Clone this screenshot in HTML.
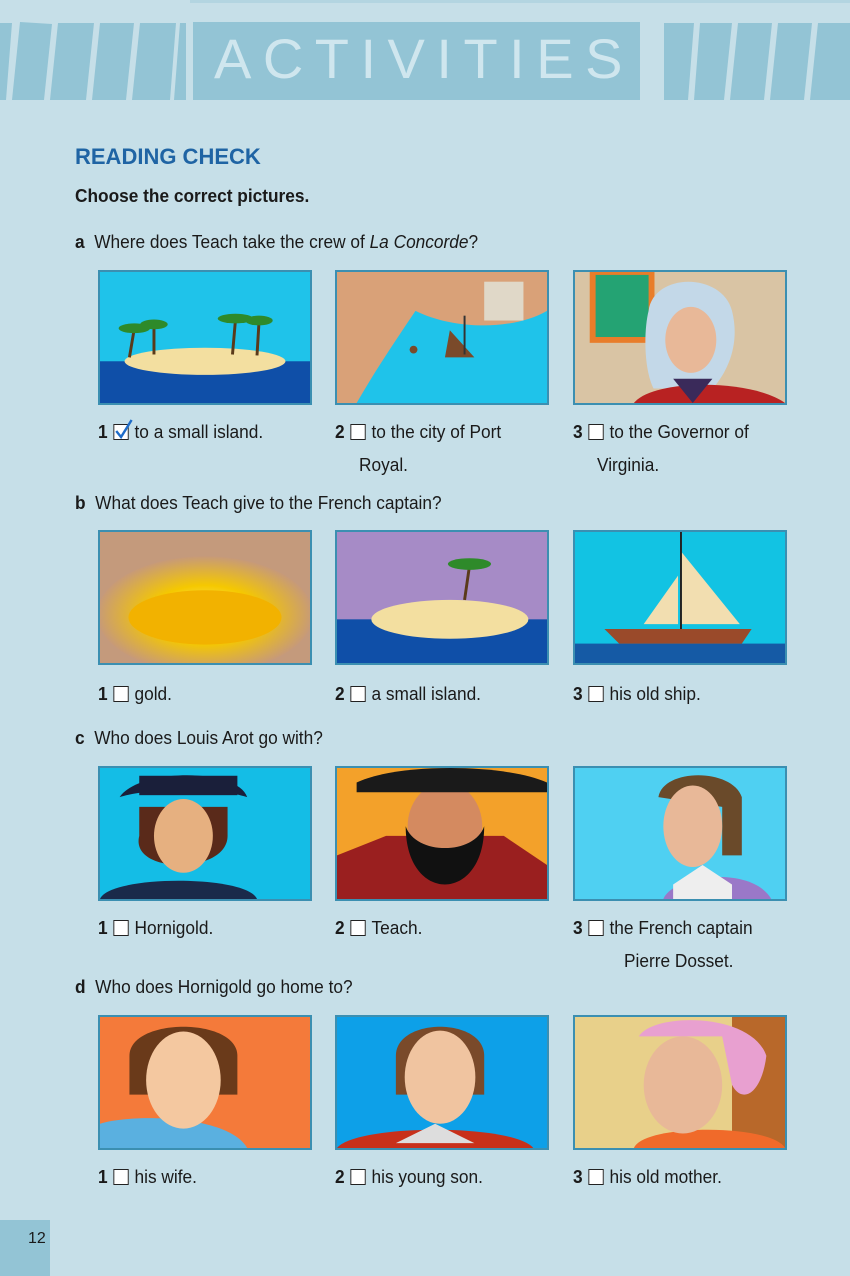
<!DOCTYPE html>
<html><head><meta charset="utf-8">
<style>
*{margin:0;padding:0;box-sizing:border-box}
body{width:850px;height:1276px;background:#c6dfe8;position:relative;overflow:hidden;font-family:"Liberation Sans Narrow","Liberation Sans",sans-serif;color:#1a1a1a}
.a{position:absolute;white-space:nowrap}
.t{font-size:18px;transform:scaleX(0.96);transform-origin:left top}
.b{font-weight:bold}
.pic{position:absolute;width:214px;height:135px;border:2px solid #3b8fb1;overflow:hidden}
.pic svg{display:block;width:100%;height:100%}
.cb{display:inline-block;width:16px;height:16px;border:1.5px solid #222;background:#fff;vertical-align:-2px;margin:0 6px 0 6px;position:relative}
.st{position:absolute;top:22px;height:78px;background:#93c4d5}
</style></head><body>
<div class="a" style="left:190px;top:0;width:1000px;height:3px;background:#b3d5e1"></div>
<svg class="a" style="left:0;top:20px" width="190" height="82"><g fill="#93c4d5">
<polygon points="0,3 12,3 6,80 0,80"/><polygon points="20,2 52,4 44,80 12,80"/><polygon points="58,3 94,3 86,80 50,80"/><polygon points="100,3 134,3 126,80 92,80"/><polygon points="140,3 176,3 170,80 132,80"/><polygon points="180,3 186,3 186,80 174,80"/></g></svg>
<div class="st" style="left:193px;width:447px"></div>
<div class="a" style="left:214px;top:26px;font-family:'Liberation Sans',sans-serif;font-size:56px;color:#cfe6ee;letter-spacing:11.5px">ACTIVITIES</div>
<svg class="a" style="left:664px;top:20px" width="186" height="82"><g fill="#93c4d5">
<polygon points="0,3 30,3 24,80 0,80"/><polygon points="36,3 68,3 60,80 30,80"/><polygon points="74,3 108,3 100,80 66,80"/><polygon points="114,3 148,3 140,80 106,80"/><polygon points="154,3 186,3 186,80 146,80"/></g></svg>

<div class="a b" style="left:75px;top:144px;font-size:22px;color:#1f64a4">READING CHECK</div>
<div class="a b t" style="left:75px;top:186px">Choose the correct pictures.</div>

<div class="a t" style="left:75px;top:232px"><b>a</b>&nbsp;&nbsp;Where does Teach take the crew of <i>La Concorde</i>?</div>
<div class="pic" style="left:98px;top:270px"><svg viewBox="0 0 214 135" preserveAspectRatio="none"><rect width="214" height="135" fill="#1fc3ea"/><rect y="92" width="214" height="43" fill="#0f4fa8"/><ellipse cx="107" cy="92" rx="82" ry="14" fill="#f3dfa0"/><g stroke="#5a3a1a" stroke-width="3"><line x1="30" y1="88" x2="35" y2="58"/><line x1="55" y1="85" x2="55" y2="55"/><line x1="135" y1="85" x2="138" y2="50"/><line x1="160" y1="86" x2="162" y2="52"/></g><g fill="#2e8a2a"><ellipse cx="35" cy="58" rx="16" ry="5"/><ellipse cx="55" cy="54" rx="14" ry="5"/><ellipse cx="138" cy="48" rx="18" ry="5"/><ellipse cx="162" cy="50" rx="14" ry="5"/></g></svg></div>
<div class="pic" style="left:335px;top:270px"><svg viewBox="0 0 214 135" preserveAspectRatio="none"><rect width="214" height="135" fill="#1fc3ea"/><path d="M0 0H214V40C180 60 120 60 80 40 60 70 40 100 20 135H0Z" fill="#d9a178"/><rect x="150" y="10" width="40" height="40" fill="#e0d8c8"/><path d="M115 60l25 28h-30z" fill="#7a4a2a"/><line x1="130" y1="45" x2="130" y2="85" stroke="#333" stroke-width="2"/><circle cx="78" cy="80" r="4" fill="#7a4a2a"/></svg></div>
<div class="pic" style="left:573px;top:270px"><svg viewBox="0 0 214 135" preserveAspectRatio="none"><rect width="214" height="135" fill="#d9c4a4"/><rect x="18" y="0" width="60" height="70" fill="#24a373" stroke="#e87d2a" stroke-width="6"/><path d="M75 40C80 0 150 0 160 40 170 80 150 110 140 120H80C70 100 70 60 75 40Z" fill="#c3d8e8"/><ellipse cx="118" cy="70" rx="26" ry="34" fill="#e8b898"/><path d="M60 135C80 110 180 110 214 135Z" fill="#b82222"/><path d="M100 110l20 25 20-25z" fill="#3a2a5a"/></svg></div>
<div class="a t" style="left:98px;top:422px"><b>1</b><span class="cb"><svg style="position:absolute;left:-1px;top:-6px" width="22" height="22"><path d="M3 12l5 6L19 1" stroke="#1e6cc8" stroke-width="2.5" fill="none"/></svg></span>to a small island.</div>
<div class="a t" style="left:335px;top:422px"><b>2</b><span class="cb"></span>to the city of Port</div>
<div class="a t" style="left:359px;top:455px">Royal.</div>
<div class="a t" style="left:573px;top:422px"><b>3</b><span class="cb"></span>to the Governor of</div>
<div class="a t" style="left:597px;top:455px">Virginia.</div>

<div class="a t" style="left:75px;top:493px"><b>b</b>&nbsp;&nbsp;What does Teach give to the French captain?</div>
<div class="pic" style="left:98px;top:530px"><svg viewBox="0 0 214 135" preserveAspectRatio="none"><defs><radialGradient id="g"><stop offset="0" stop-color="#fff27a"/><stop offset="0.5" stop-color="#f5c800"/><stop offset="1" stop-color="#c79a78"/></radialGradient></defs><rect width="214" height="135" fill="#c49a7c"/><ellipse cx="107" cy="85" rx="110" ry="60" fill="url(#g)"/><ellipse cx="107" cy="88" rx="78" ry="28" fill="#f2b200"/></svg></div>
<div class="pic" style="left:335px;top:530px"><svg viewBox="0 0 214 135" preserveAspectRatio="none"><rect width="214" height="135" fill="#a68bc6"/><rect y="90" width="214" height="45" fill="#0f4fa8"/><ellipse cx="115" cy="90" rx="80" ry="20" fill="#f3dfa0"/><line x1="130" y1="70" x2="135" y2="35" stroke="#5a3a1a" stroke-width="3"/><ellipse cx="135" cy="33" rx="22" ry="6" fill="#2e8a2a"/></svg></div>
<div class="pic" style="left:573px;top:530px"><svg viewBox="0 0 214 135" preserveAspectRatio="none"><rect width="214" height="135" fill="#12c3e3"/><rect y="115" width="214" height="20" fill="#155aa5"/><path d="M30 100h150l-10 15H45z" fill="#9a4a2a"/><path d="M70 95l35-50v50z M108 95V20l60 75z" fill="#f2deb0"/><line x1="108" y1="0" x2="108" y2="100" stroke="#222" stroke-width="2"/></svg></div>
<div class="a t" style="left:98px;top:684px"><b>1</b><span class="cb"></span>gold.</div>
<div class="a t" style="left:335px;top:684px"><b>2</b><span class="cb"></span>a small island.</div>
<div class="a t" style="left:573px;top:684px"><b>3</b><span class="cb"></span>his old ship.</div>

<div class="a t" style="left:75px;top:728px"><b>c</b>&nbsp;&nbsp;Who does Louis Arot go with?</div>
<div class="pic" style="left:98px;top:766px"><svg viewBox="0 0 214 135" preserveAspectRatio="none"><rect width="214" height="135" fill="#14bde6"/><path d="M0 135C10 110 150 110 160 135Z" fill="#1a2a4a"/><path d="M40 70C30 110 130 110 130 70V40H40Z" fill="#5a2a1a"/><ellipse cx="85" cy="70" rx="30" ry="38" fill="#e6b080"/><path d="M20 30C40 0 140 0 150 30 120 20 50 20 20 30Z" fill="#1a1f3a"/><rect x="40" y="8" width="100" height="20" fill="#1a1f3a"/></svg></div>
<div class="pic" style="left:335px;top:766px"><svg viewBox="0 0 214 135" preserveAspectRatio="none"><rect width="214" height="135" fill="#f3a12a"/><path d="M0 135V90L50 70H170L214 100V135Z" fill="#9a1f1f"/><ellipse cx="110" cy="60" rx="38" ry="45" fill="#d48a60"/><path d="M70 60C70 140 150 140 150 60 140 90 80 90 70 60Z" fill="#111"/><path d="M20 15C60 -5 170 -5 214 15V25H20Z" fill="#1a1a1a"/></svg></div>
<div class="pic" style="left:573px;top:766px"><svg viewBox="0 0 214 135" preserveAspectRatio="none"><rect width="214" height="135" fill="#4fd0f2"/><path d="M90 135C100 110 180 100 200 135Z" fill="#9a78c8"/><path d="M100 120l30-20 30 20v15h-60z" fill="#eee"/><path d="M85 30C90 0 160 0 170 30V90H150V40Z" fill="#6a4a2a"/><ellipse cx="120" cy="60" rx="30" ry="42" fill="#e8b898"/></svg></div>
<div class="a t" style="left:98px;top:918px"><b>1</b><span class="cb"></span>Hornigold.</div>
<div class="a t" style="left:335px;top:918px"><b>2</b><span class="cb"></span>Teach.</div>
<div class="a t" style="left:573px;top:918px"><b>3</b><span class="cb"></span>the French captain</div>
<div class="a t" style="left:624px;top:951px">Pierre Dosset.</div>

<div class="a t" style="left:75px;top:977px"><b>d</b>&nbsp;&nbsp;Who does Hornigold go home to?</div>
<div class="pic" style="left:98px;top:1015px"><svg viewBox="0 0 214 135" preserveAspectRatio="none"><rect width="214" height="135" fill="#f47a3a"/><path d="M0 135V110C30 100 130 100 150 135Z" fill="#5ab0e0"/><path d="M30 40C30 0 140 0 140 40V80H30Z" fill="#6a3a1a"/><ellipse cx="85" cy="65" rx="38" ry="50" fill="#f4c8a0"/></svg></div>
<div class="pic" style="left:335px;top:1015px"><svg viewBox="0 0 214 135" preserveAspectRatio="none"><rect width="214" height="135" fill="#0da0e8"/><path d="M0 135C20 110 180 110 200 135Z" fill="#c8301a"/><path d="M60 130l40-20 40 20z" fill="#ddd"/><path d="M60 40C60 0 150 0 150 40V80H60Z" fill="#7a4a2a"/><ellipse cx="105" cy="62" rx="36" ry="48" fill="#f0c4a0"/></svg></div>
<div class="pic" style="left:573px;top:1015px"><svg viewBox="0 0 214 135" preserveAspectRatio="none"><rect width="214" height="135" fill="#e8d08a"/><rect x="160" y="0" width="54" height="135" fill="#b8682a"/><path d="M60 135C70 110 200 110 214 135Z" fill="#f06a2a"/><path d="M65 20C80 -5 180 -5 195 40 190 80 170 90 160 70L150 20Z" fill="#e8a0d0"/><ellipse cx="110" cy="70" rx="40" ry="50" fill="#e8b898"/></svg></div>
<div class="a t" style="left:98px;top:1167px"><b>1</b><span class="cb"></span>his wife.</div>
<div class="a t" style="left:335px;top:1167px"><b>2</b><span class="cb"></span>his young son.</div>
<div class="a t" style="left:573px;top:1167px"><b>3</b><span class="cb"></span>his old mother.</div>

<div class="a" style="left:0;top:1220px;width:50px;height:56px;background:#93c4d5"></div>
<div class="a" style="left:28px;top:1230px;font-size:16px;color:#1a1a1a">12</div>
</body></html>
